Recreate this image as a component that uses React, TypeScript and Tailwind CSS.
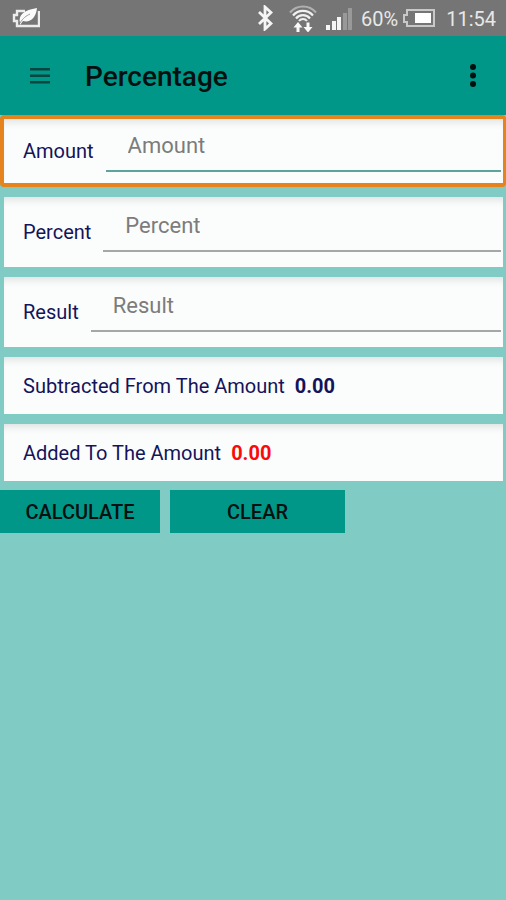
import React, { useState } from "react";
import type { ReactNode } from "react";

const BatterySaverIcon = () => (
    <svg width="28" height="20" viewBox="0 0 28 20" fill="none" aria-hidden="true">
        <path d="M13 3H5v4H2v6h3v5h22V3" stroke="#ececec" strokeWidth="2.400" />
        <path d="M8 15C6 7 12 2 25 0c-1 10-7 15-14 13l-3 4z" fill="#fafafa" />
        <path d="M8 15C11 10 14 8 18 6" stroke="#9a9a9a" strokeWidth="1" />
    </svg>
);

const BluetoothIcon = () => (
    <svg width="16" height="26" viewBox="0 0 16 26" fill="none" aria-hidden="true">
        <path d="M2 7l12 11.500-6 5.500V2l6 5.500L2 19" stroke="#f5f5f5" strokeWidth="2.800" />
    </svg>
);

const WifiIcon = () => (
    <svg width="28" height="28" viewBox="0 0 28 28" fill="none" aria-hidden="true">
        <path d="M1 8.500A17 17 0 0 1 27 8.500" stroke="#b0b0b0" strokeWidth="2" />
        <path d="M4 11.500A13 13 0 0 1 24 11.500M7 14.500A9 9 0 0 1 21 14.500" stroke="#f0f0f0" strokeWidth="2.200" />
        <path d="M10 17A5 5 0 0 1 18 17" stroke="#f0f0f0" strokeWidth="2" />
        <path d="M9 18l4.500 5.500h-3V28h-3v-4.500h-3zM19 28.500L14.500 23h3v-4.500h3V23h3z" fill="#fafafa" />
    </svg>
);

const SignalIcon = () => (
    <svg width="28" height="24" viewBox="0 0 28 24" aria-hidden="true">
        <path d="M1 19h4v5H1zM7 15h4v9H7zM12 11h4v13h-4z" fill="#f5f5f5" />
        <path d="M18 7h4v17h-4zM23 2h4v22h-4z" fill="#999999" />
    </svg>
);

const BatteryIcon = () => (
    <svg width="34" height="18" viewBox="0 0 34 18" fill="none" aria-hidden="true">
        <path d="M5 1h27v16H5v-4H2V6h3z" stroke="#c8c8c8" strokeWidth="2" />
        <path d="M13 4h16v10H13z" fill="#fff" />
    </svg>
);

const StatusBar = () => (
    <div className="flex h-9 items-center justify-between bg-[#757575] pr-[10px] pl-3 text-[20px] text-[#e8e8e8]">
        <BatterySaverIcon />
        <div className="flex items-center">
            <BluetoothIcon />
            <div className="ml-4">
                <WifiIcon />
            </div>
            <div className="ml-2">
                <SignalIcon />
            </div>
            <span className="ml-2 pt-[2px]">60%</span>
            <div className="ml-1">
                <BatteryIcon />
            </div>
            <span className="ml-[10px] pt-[2px]">11:54</span>
        </div>
    </div>
);

const Header = () => (
    <header className="flex h-[79px] items-center bg-[#009688] pr-[28px] pl-[30px] text-[#04100f]">
        <button aria-label="Open menu">
            <svg width="20" height="16" viewBox="0 0 20 16" aria-hidden="true">
                <path d="M0 0h20v2.500H0zM0 6.500h20V9H0zM0 13h20v2.500H0z" fill="#064640" />
            </svg>
        </button>
        <h1 className="ml-[35px] flex-1 pt-[2px] text-[28px] font-medium">Percentage</h1>
        <button aria-label="More options">
            <svg width="10" height="24" viewBox="0 0 10 24" fill="#04100f" aria-hidden="true">
                <circle cx="5" cy="3" r="3" />
                <circle cx="5" cy="11.500" r="3" />
                <circle cx="5" cy="20" r="3" />
            </svg>
        </button>
    </header>
);

const cardShadow = "bg-[#fbfdfc] shadow-[inset_0_8px_8px_-6px_#d8dcdc]";

interface FieldProps {
    id: string;
    label: string;
    value: string;
    highlighted?: boolean;
    readOnly?: boolean;
    onChange?: (value: string) => void;
}

const Field = ({ id, label, value, highlighted, readOnly, onChange }: FieldProps) => (
    <div
        className={`flex items-center ${cardShadow} ${
            highlighted
                ? "h-[72px] rounded-[4px] border-4 border-r-[3px] border-[#e5831c] pl-[19px]"
                : "mr-[3px] ml-1 h-[70px] pl-[19px]"
        }`}
    >
        <label htmlFor={id} className="text-[20px] text-[#14145a]">
            {label}
        </label>
        <input
            id={id}
            value={value}
            readOnly={readOnly}
            placeholder={label}
            inputMode="decimal"
            onChange={(e) => onChange?.(e.target.value)}
            className={`mr-[2px] ml-3 min-w-0 flex-1 self-start border-b-2 pl-[22px] text-[22px] text-[#212121] outline-none placeholder:text-[#7c7c7c] ${
                highlighted ? "h-[53px] border-[#5fa39d] pt-[2px]" : "h-[55px] border-[#a6a6a6] pt-1"
            }`}
        />
    </div>
);

const Total = ({ label, children }: { label: string; children: ReactNode }) => (
    <div className={`mr-[3px] ml-1 flex h-[57px] items-center pl-[19px] text-[20px] text-[#14145a] ${cardShadow}`}>
        <span>{label}</span>
        {children}
    </div>
);

const App = () => {
    const [amount, setAmount] = useState("");
    const [percent, setPercent] = useState("");
    const [result, setResult] = useState<number | null>(null);

    const calculate = () => {
        setResult((Number(amount) * Number(percent)) / 100 || 0);
    };

    const clear = () => {
        setAmount("");
        setPercent("");
        setResult(null);
    };

    const subtracted = result === null ? 0 : Number(amount) - result;
    const added = result === null ? 0 : Number(amount) + result;

    return (
        <div className="min-h-screen bg-[#80cbc4] font-['Roboto',sans-serif]">
            <StatusBar />
            <Header />
            <main>
                <div className="flex flex-col gap-[10px]">
                    <Field id="amount" label="Amount" value={amount} onChange={setAmount} highlighted />
                    <Field id="percent" label="Percent" value={percent} onChange={setPercent} />
                    <Field id="result" label="Result" value={result === null ? "" : result.toFixed(2)} readOnly />
                    <Total label="Subtracted From The Amount">
                        <span className="ml-[10px] font-bold">{subtracted.toFixed(2)}</span>
                    </Total>
                    <Total label="Added To The Amount">
                        <span className="ml-[10px] font-bold text-[#fa0a0a]">{added.toFixed(2)}</span>
                    </Total>
                </div>
                <div className="mt-[9px] flex gap-[10px] text-[20px] font-medium text-[#04100f]">
                    <button onClick={calculate} className="h-[43px] w-[160px] bg-[#009688]">
                        CALCULATE
                    </button>
                    <button onClick={clear} className="h-[43px] w-[175px] bg-[#009688]">
                        CLEAR
                    </button>
                </div>
            </main>
        </div>
    );
};

export default App;
